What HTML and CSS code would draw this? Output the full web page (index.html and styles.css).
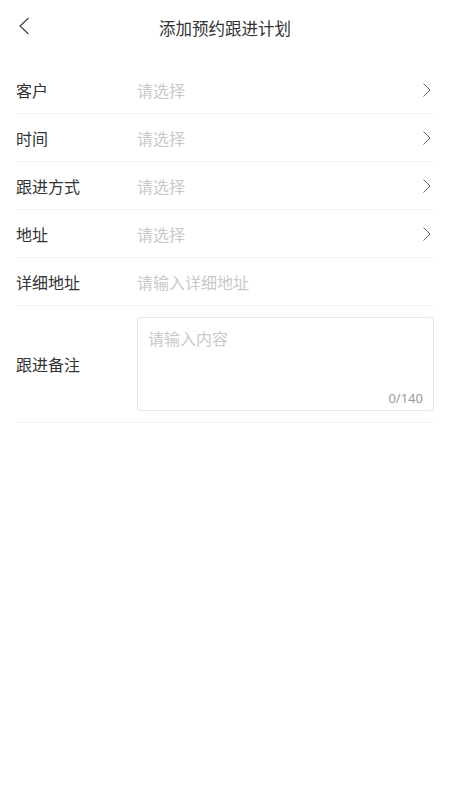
FILE: index.html
```html
<!DOCTYPE html>
<html lang="zh-CN">
<head>
    <meta charset="UTF-8">
    <meta name="viewport" content="width=device-width, initial-scale=1.0">
    <title>添加预约跟进计划</title>
    <link rel="stylesheet" href="styles.css">
</head>
<body>
    <header class="nav-bar">
        <span class="nav-back">
            <svg width="12" height="18" viewBox="0 0 12 18">
                <polyline points="10.5,1 2,9 10.5,17" fill="none" stroke="#444" stroke-width="1.2"/>
            </svg>
        </span>
        <h1 class="nav-title">添加预约跟进计划</h1>
    </header>

    <div class="form">
        <div class="form-row">
            <span class="form-label">客户</span>
            <span class="form-value">请选择</span>
            <span class="arrow"><svg width="10" height="16" viewBox="0 0 10 16"><polyline points="2.5,1.5 9,8 2.5,14.5" fill="none" stroke="#666" stroke-width="1"/></svg></span>
        </div>
        <div class="form-row">
            <span class="form-label">时间</span>
            <span class="form-value">请选择</span>
            <span class="arrow"><svg width="10" height="16" viewBox="0 0 10 16"><polyline points="2.5,1.5 9,8 2.5,14.5" fill="none" stroke="#666" stroke-width="1"/></svg></span>
        </div>
        <div class="form-row">
            <span class="form-label">跟进方式</span>
            <span class="form-value">请选择</span>
            <span class="arrow"><svg width="10" height="16" viewBox="0 0 10 16"><polyline points="2.5,1.5 9,8 2.5,14.5" fill="none" stroke="#666" stroke-width="1"/></svg></span>
        </div>
        <div class="form-row">
            <span class="form-label">地址</span>
            <span class="form-value">请选择</span>
            <span class="arrow"><svg width="10" height="16" viewBox="0 0 10 16"><polyline points="2.5,1.5 9,8 2.5,14.5" fill="none" stroke="#666" stroke-width="1"/></svg></span>
        </div>
        <div class="form-row">
            <span class="form-label">详细地址</span>
            <span class="form-value">请输入详细地址</span>
        </div>
        <div class="form-row form-row-tall">
            <span class="form-label">跟进备注</span>
            <div class="textarea-box">
                <div class="textarea-placeholder">请输入内容</div>
                <div class="textarea-count">0/140</div>
            </div>
        </div>
    </div>
</body>
</html>
```

FILE: styles.css
```css
body {
    margin: 0;
    background-color: #fff;
    font-family: "Noto Sans CJK SC", "Noto Sans", sans-serif;
    color: #333;
}

.nav-bar {
    height: 56px;
    display: flex;
    align-items: center;
    justify-content: center;
    position: relative;
}

.nav-back {
    position: absolute;
    left: 18px;
    top: 17px;
    display: flex;
}

.nav-title {
    margin: 0 0 1px;
    font-size: 16.5px;
    font-weight: normal;
    color: #333;
}

.form {
    margin-top: 10px;
    padding: 0 16px;
}

.form-row {
    display: flex;
    align-items: center;
    height: 47px;
    border-bottom: 1px solid #f2f2f2;
}

.form-label {
    width: 121px;
    flex-shrink: 0;
    font-size: 16px;
    color: #333;
}

.form-value {
    flex: 1;
    font-size: 16px;
    color: #c8c9cc;
}

.arrow {
    display: flex;
    margin-right: 3px;
}

.form-row-tall {
    height: auto;
    padding: 11px 0 11px;
}

.textarea-box {
    flex: 1;
    height: 94px;
    box-sizing: border-box;
    border: 1px solid #e6e6e6;
    border-radius: 4px;
    padding: 8px 10px 3px;
    display: flex;
    flex-direction: column;
    justify-content: space-between;
}

.textarea-placeholder {
    font-size: 16px;
    color: #c8c9cc;
}

.textarea-count {
    text-align: right;
    font-size: 13px;
    color: #999;
    font-family: "Noto Sans", sans-serif;
}
```
